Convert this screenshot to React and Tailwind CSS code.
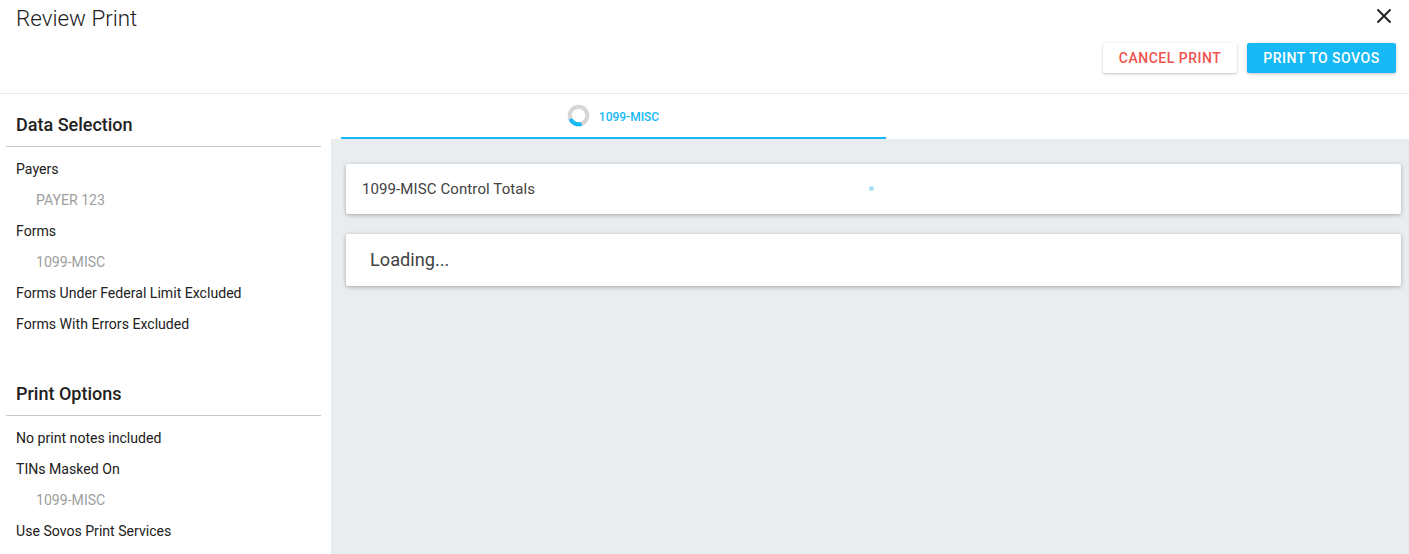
import React from "react";

const Row = ({ children, sub }) => (
  <div className={sub ? "h-[31px] flex items-center pl-[36px] text-[14.1px] text-[#9e9e9e]" : "h-[31px] flex items-center pl-[16px] text-[14.1px] text-[#212121]"}>
    {children}
  </div>
);

const Heading = ({ children }) => (
  <div className="h-[41px] ml-[6px] w-[315px] pl-[10px] border-b border-[#c8c8c8] flex items-end pb-[11px] text-[18px] leading-[21px] font-medium text-[#212121]">
    {children}
  </div>
);

export default function App() {
  return (
    <div className="w-[1409px] h-[554px] overflow-hidden bg-white flex flex-col font-['Roboto',sans-serif]">
      <header className="h-[94px] shrink-0 border-b border-[#eaeaea] relative flex justify-between pl-[16px] pr-[13px]">
        <h1 className="text-[22.4px] leading-[26px] mt-[5px] font-light text-[#212121]">Review Print</h1>
        <div className="flex flex-col items-end">
          <svg width="16" height="16" viewBox="0 0 16 16" className="mt-[8px] mr-[4px]" fill="none" stroke="#212121" strokeWidth="2">
            <path d="M1.5 1.5 L14.5 14.5 M14.5 1.5 L1.5 14.5" />
          </svg>
          <div className="flex gap-[10px] mt-[19px]">
            <button className="w-[134px] h-[30px] bg-white rounded-[2px] text-[14px] font-medium tracking-[0.5px] text-[#ef5350] shadow-[0_1px_3px_rgba(0,0,0,0.25)]">CANCEL PRINT</button>
            <button className="w-[149px] h-[30px] bg-[#16b9f5] rounded-[2px] text-[14px] font-medium tracking-[0.5px] text-white shadow-[0_1px_3px_rgba(0,0,0,0.25)]">PRINT TO SOVOS</button>
          </div>
        </div>
      </header>
      <div className="flex-1 flex min-h-0">
        <aside className="w-[331px] shrink-0 pt-[12px]">
          <Heading>Data Selection</Heading>
          <div className="pt-[7px]">
            <Row>Payers</Row>
            <Row sub>PAYER 123</Row>
            <Row>Forms</Row>
            <Row sub>1099-MISC</Row>
            <Row>Forms Under Federal Limit Excluded</Row>
            <Row>Forms With Errors Excluded</Row>
          </div>
          <div className="mt-[35px]">
            <Heading>Print Options</Heading>
          </div>
          <div className="pt-[7px]">
            <Row>No print notes included</Row>
            <Row>TINs Masked On</Row>
            <Row sub>1099-MISC</Row>
            <Row>Use Sovos Print Services</Row>
          </div>
        </aside>
        <main className="flex-1 flex flex-col min-w-0">
          <div className="h-[45px] shrink-0 pl-[10px]">
            <div className="w-[545px] h-[45px] border-b-2 border-[#16b9f5] flex items-center justify-center gap-[9px] pb-[1px] pr-[1px]">
              <svg width="23" height="23" viewBox="0 0 23 23" fill="none" strokeWidth="4">
                <circle cx="11.5" cy="11.5" r="8.8" stroke="#d6d6d6" />
                <path d="M3.4 15 A8.8 8.8 0 0 0 14.5 19.8" stroke="#16b9f5" />
              </svg>
              <span className="text-[12px] font-medium text-[#16b9f5] mt-[3px]">1099-MISC</span>
            </div>
          </div>
          <div className="flex-1 bg-[#e9edf0] pt-[25px] pl-[15px] pr-[8px] flex flex-col gap-[20px]">
            <div className="h-[50px] bg-white rounded-[2px] shadow-[0_1px_4px_rgba(0,0,0,0.3)] flex items-center pl-[16px] relative">
              <span className="text-[15px] tracking-[0.1px] text-[#424242] mt-[1px]">1099-MISC Control Totals</span>
              <span className="absolute left-[523px] top-[22px] w-[5px] h-[5px] rounded-full bg-[#a9e2f5]"></span>
            </div>
            <div className="h-[52px] bg-white rounded-[2px] shadow-[0_1px_4px_rgba(0,0,0,0.3)] flex items-center pl-[24px]">
              <span className="text-[18.2px] text-[#424242] mb-[1px]">Loading...</span>
            </div>
          </div>
        </main>
      </div>
    </div>
  );
}
